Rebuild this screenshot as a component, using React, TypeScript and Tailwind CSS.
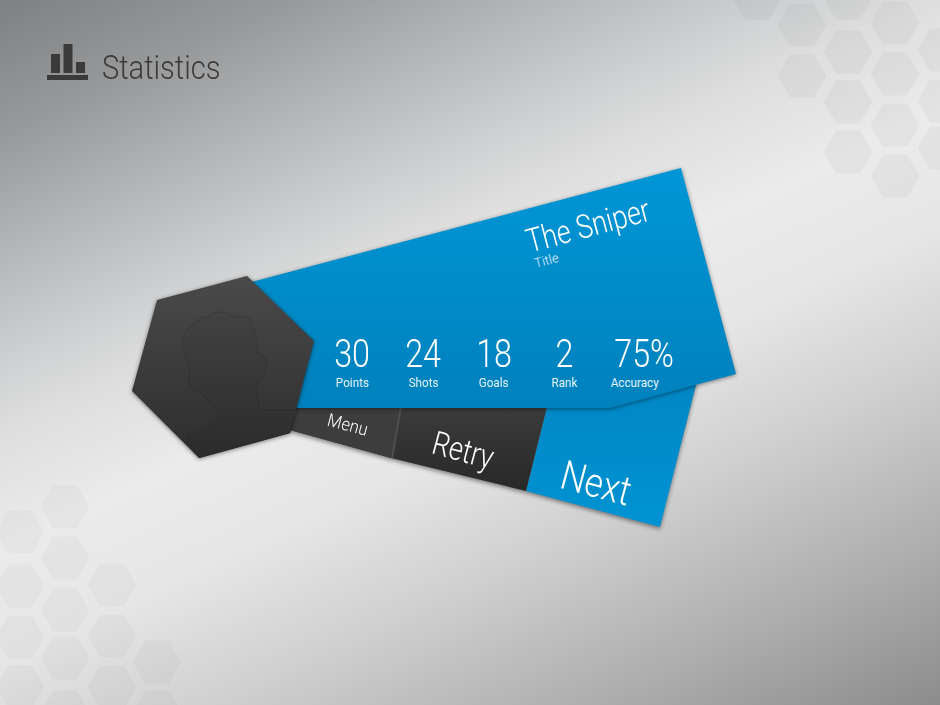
import React from 'react';

const hexes: [number, number][] = [
  [757, -2], [802, 25], [802, 76], [848, -2], [848, 52], [848, 102], [848, 152],
  [895, 23], [895, 74], [895, 125], [895, 176], [942, 50], [942, 101], [942, 148],
  [65, 507], [20, 532], [65, 558], [20, 586], [112, 585], [65, 610], [20, 637],
  [65, 658], [112, 636], [157, 662], [20, 687], [112, 687], [65, 712], [157, 712],
];

const hexPoints = (cx: number, cy: number) =>
  `${cx - 24.5},${cy} ${cx - 12},${cy - 21.5} ${cx + 12},${cy - 21.5} ${cx + 24.5},${cy} ${cx + 12},${cy + 21.5} ${cx - 12},${cy + 21.5}`;

const stats = [
  { value: '30', label: 'Points', box: 'w-[71px]', shift: '' },
  { value: '24', label: 'Shots', box: 'w-[71px]', shift: '' },
  { value: '18', label: 'Goals', box: 'w-[70px]', shift: '' },
  { value: '2', label: 'Rank', box: 'w-[71px]', shift: '' },
  { value: '75%', label: 'Accuracy', box: 'w-[88px]', shift: '-translate-x-[9px]' },
];

const Ticket = () => (
  <svg className="absolute inset-0" width="940" height="705" viewBox="0 0 940 705">
    <defs>
      <linearGradient id="blue" x1="0" y1="0" x2="0" y2="1">
        <stop offset="0" stopColor="#0096d6" />
        <stop offset="1" stopColor="#0081bd" />
      </linearGradient>
      <linearGradient id="next" x1="0" y1="0" x2="0" y2="1">
        <stop offset="0" stopColor="#0086c4" />
        <stop offset="1" stopColor="#0093d3" />
      </linearGradient>
      <linearGradient id="hex" x1="0" y1="0" x2="0" y2="1">
        <stop offset="0" stopColor="#4a4a4a" />
        <stop offset="1" stopColor="#2d2d2d" />
      </linearGradient>
      <linearGradient id="head" x1="0" y1="0" x2="0" y2="1">
        <stop offset="0" stopColor="#424242" />
        <stop offset="1" stopColor="#2b2b2b" />
      </linearGradient>
      <linearGradient id="retry" x1="0" y1="0" x2="0" y2="1">
        <stop offset="0" stopColor="#3b3b3b" />
        <stop offset="1" stopColor="#282828" />
      </linearGradient>
    </defs>

    {/* back strip */}
    <g className="drop-shadow-[0_2px_2px_rgba(0,0,0,0.45)]">
      <polygon points="547,407 697,381 660,527 526,491" fill="url(#next)" />
      <polygon points="280,407 547,407 526,491 391,458 290,430" fill="url(#retry)" />
      <polygon points="280,407 401,407 391,458 290,430" fill="#3d3d3d" />
    </g>
    <line x1="401" y1="407" x2="392" y2="458" stroke="#4e4e4e" strokeWidth="2" />

    {/* front card */}
    <polygon
      className="drop-shadow-[0_1px_2px_rgba(0,0,0,0.45)]"
      points="240,285 681,168 736,374 610,408 280,408"
      fill="url(#blue)"
    />

    {/* avatar */}
    <polygon
      className="drop-shadow-[0_1px_2px_rgba(0,0,0,0.5)]"
      points="247,276 314,341 290,433 199,458 132,391 157,300"
      fill="url(#hex)"
    />
    <path
      d="M186,437 L218,422 Q219,414 216,410 Q208,402 202,393 Q196,393 192,388 Q186,382 190,372 L183,347 Q182,338 184,335 Q188,326 192,325 Q200,317 208,317 Q214,311 220,312 Q228,312 235,317 Q242,315 247,317 Q252,319 253,325 L257,340 L258,353 Q266,356 267,365 Q266,374 258,382 L257,393 L260,410 L297,410 L290,433 L199,458 Z"
      fill="url(#head)"
      stroke="#000"
      strokeOpacity="0.12"
    />
  </svg>
);

export default function App() {
  return (
    <div className="relative w-[940px] h-[705px] overflow-hidden bg-[linear-gradient(155deg,#7e8082_0%,#98999a_12%,#c6c9cb_29%,#dedede_38%,#ebebeb_48%,#e6e6e6_58%,#d0d0d0_70%,#adadad_86%,#8c8c8c_100%)] font-['Roboto',sans-serif]">
      <svg className="absolute inset-0" width="940" height="705" viewBox="0 0 940 705">
        {hexes.map(([x, y], i) => (
          <polygon key={i} points={hexPoints(x, y)} fill="#000" fillOpacity={x < 300 ? 0.025 : 0.03} />
        ))}
      </svg>

      <header className="relative flex items-start gap-[13px] pl-[47px] pt-[44px]">
        <svg width="42" height="37" viewBox="0 0 42 37" fill="#3a3a3a">
          <rect x="4" y="10" width="9" height="19" />
          <rect x="16.5" y="0" width="9" height="29" />
          <rect x="29" y="18" width="9" height="11" />
          <rect x="0" y="31" width="41" height="5" />
        </svg>
        <h1 className="mt-[5px] text-[34px] leading-[37px] font-light text-[#3a3a3a] origin-left scale-x-[.855]">Statistics</h1>
      </header>

      <Ticket />

      <div className="absolute left-[317px] top-[336px] flex">
        {stats.map((s) => (
          <div key={s.label} className={`${s.box} flex flex-col items-center text-white`}>
            <span className="text-[38px] leading-[36px] font-light scale-x-[.85]">{s.value}</span>
            <span className={`${s.shift} text-[13px] leading-[16px] mt-[3px] text-[#e6f3fa] scale-x-[.9]`}>{s.label}</span>
          </div>
        ))}
      </div>

      {/* title block, tilted with the card */}
      <div className="absolute left-[603px] top-[228px] -translate-x-1/2 -translate-y-1/2 rotate-[-15deg] flex flex-col items-start text-white">
        <span className="text-[33px] leading-[33px] font-light whitespace-nowrap origin-left scale-x-[.82]">The Sniper</span>
        <span className="ml-[2px] text-[13px] leading-[13px] font-light text-[#e6f3fa]">Title</span>
      </div>

      {/* actions, tilted the other way */}
      <div className="absolute left-[482px] top-[453px] -translate-x-1/2 -translate-y-1/2 rotate-[15deg] flex items-baseline text-white font-light text-center">
        <span className="w-[90px] text-[18px] leading-none scale-x-[.92]">Menu</span>
        <span className="w-[146px] text-[33px] leading-none scale-x-[.82]">Retry</span>
        <span className="w-[128px] text-[41px] leading-none scale-x-[.85]">Next</span>
      </div>
    </div>
  );
}
